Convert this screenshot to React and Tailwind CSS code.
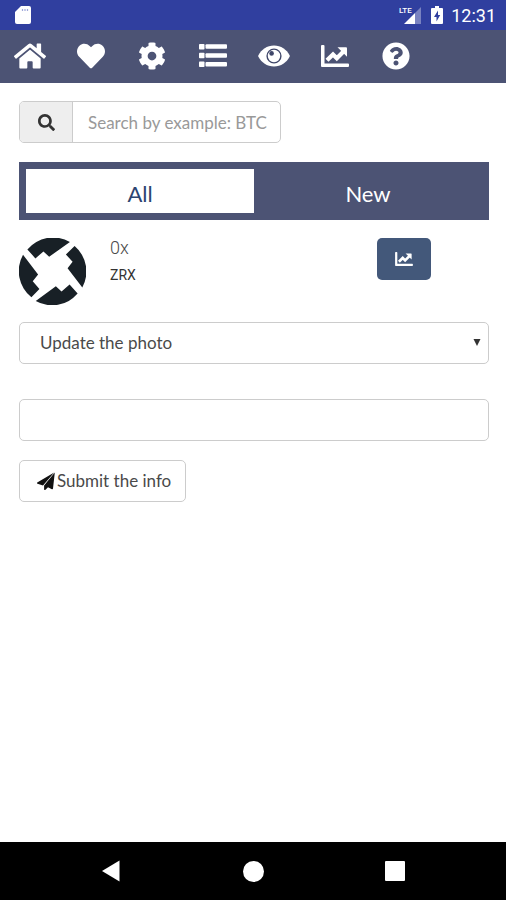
import React from 'react';
import { FaHome, FaHeart, FaCog, FaQuestionCircle, FaSearch } from 'react-icons/fa';

function EyeIcon({ className }) {
  return (
    <svg viewBox="0 0 32 22" className={className} aria-hidden="true">
      <path
        fill="currentColor"
        d="M16 .5C9 .5 3.400 4.500 .4 10.200a1.800 1.800 0 0 0 0 1.600C3.400 17.500 9 21.500 16 21.500s12.600-4 15.600-9.700a1.800 1.800 0 0 0 0-1.600C28.600 4.500 23 .5 16 .5Z"
      />
      <circle cx="16" cy="11" r="6.900" fill="none" stroke="#3f4669" strokeWidth="1.400" />
      <circle cx="13.600" cy="8.400" r="2.300" fill="#3f4669" />
    </svg>
  );
}

function ListIcon({ className }) {
  return (
    <svg viewBox="0 0 28 23" className={className} fill="currentColor" aria-hidden="true">
      <rect x="0" y="0" width="5.500" height="5.500" rx="0.800" />
      <rect x="6.500" y="0.300" width="21.500" height="4.500" rx="1" />
      <rect x="0" y="8.800" width="5.500" height="5.500" rx="0.800" />
      <rect x="6.500" y="9.300" width="21.500" height="4.500" rx="1" />
      <rect x="0" y="17.500" width="5.500" height="5.500" rx="0.800" />
      <rect x="6.500" y="18" width="21.500" height="4.500" rx="1" />
    </svg>
  );
}

function ChartIcon({ className }) {
  return (
    <svg viewBox="0 0 28 22" className={className} aria-hidden="true">
      <path fill="currentColor" d="M0 1a1 1 0 0 1 1-1h1.500a1 1 0 0 1 1 1v17.500H27a1 1 0 0 1 1 1V21a1 1 0 0 1-1 1H1a1 1 0 0 1-1-1Z" />
      <path fill="none" stroke="currentColor" strokeWidth="4.200" d="M6 15.200L12 9.400l3.800 3.800L22.500 6.500" />
      <path fill="currentColor" d="M16.500 2.200h8.500a1 1 0 0 1 1 1v8.500Z" />
    </svg>
  );
}

function PlaneIcon({ className }) {
  return (
    <svg viewBox="0 0 18 18" className={className} fill="currentColor" aria-hidden="true">
      <path d="M.2 10.500L17.200 .5L6 13.500L.5 11.700a.7.700 0 0 1-.3-1.200Z" />
      <path d="M17.800 .6L16 16.500a.8.800 0 0 1-1.100.700L11 15.200L8.500 17.800c-.400.500-1.400.2-1.400-.4V13.400Z" />
    </svg>
  );
}

const navItems = [
  { label: 'Home', icon: <FaHome className="size-8" /> },
  { label: 'Favourites', icon: <FaHeart className="size-7" /> },
  { label: 'Settings', icon: <FaCog className="size-7" /> },
  { label: 'List', icon: <ListIcon className="h-[23px] w-7" /> },
  { label: 'Watch', icon: <EyeIcon className="h-[22px] w-8" /> },
  { label: 'Charts', icon: <ChartIcon className="h-[22px] w-7" /> },
  { label: 'Help', icon: <FaQuestionCircle className="size-7" /> },
];

function StatusBar() {
  return (
    <div className="flex h-[30px] items-center justify-between bg-[#303f9f] pr-2.5 pl-3.5 text-white">
      <svg viewBox="0 0 18 20" className="h-5 w-[18px]" aria-hidden="true">
        <path fill="currentColor" d="M7 1h8a2 2 0 0 1 2 2v14a2 2 0 0 1-2 2H3a2 2 0 0 1-2-2V7Z" />
        <path stroke="#9fa8da" strokeWidth="1.200" d="M8.500 4v2M11 4v2M13.500 4v2" />
      </svg>
      <div className="flex items-center">
        <svg viewBox="0 0 22 20" className="mr-2.5 h-5 w-[22px]" aria-hidden="true">
          <path fill="#7982c0" d="M16 8l6-6v17h-6Z" />
          <path fill="currentColor" d="M5 19L16 8v11Z" />
          <text x="0" y="8" fontSize="8" fontWeight="500" fill="currentColor" className="font-['Roboto',sans-serif]">
            LTE
          </text>
        </svg>
        <svg viewBox="0 0 12 20" className="mr-2 h-5 w-3" aria-hidden="true">
          <path fill="currentColor" d="M4 1h4v2h3a1 1 0 0 1 1 1v14a1 1 0 0 1-1 1H1a1 1 0 0 1-1-1V4a1 1 0 0 1 1-1h3Z" />
          <path fill="#303f9f" d="M7 5.500L3 12h2.500v4.500L9.200 10H7Z" />
        </svg>
        <span className="pt-0.5 font-['Roboto',sans-serif] text-[18px] leading-5">12:31</span>
      </div>
    </div>
  );
}

function ZrxLogo() {
  return (
    <svg viewBox="56 38 200 200" className="size-[67px]" role="img" aria-label="0x">
      <g fill="#182026">
        <path d="M81 72A100 100 0 0 1 208 50L146 94L129 78L105 99Z" />
        <path d="M222 62A100 100 0 0 1 245 186L217 149L201 128L216 109L196 87Z" />
        <path d="M231 204A100 100 0 0 1 106 226L166 182L183 198L207 177Z" />
        <path d="M68 88A100 100 0 0 0 93 215L117 190L97 167L113 147Z" />
      </g>
    </svg>
  );
}

export default function App() {
  return (
    <div className="flex min-h-screen flex-col bg-white font-['Lato',sans-serif] text-[#4a4a4a]">
      <StatusBar />
      <nav className="flex h-[53px] bg-[#4c5374] pb-0.5 text-white">
        {navItems.map((item) => (
          <a key={item.label} href="#" aria-label={item.label} className="flex w-[61px] items-center justify-center pr-0.5">
            {item.icon}
          </a>
        ))}
      </nav>

      <main className="flex flex-1 flex-col pt-[18px] pr-[17px] pl-[19px]">
        <div className="flex h-[42px] w-[262px] overflow-hidden rounded-[5px] border border-[#ccc]">
          <label htmlFor="search" aria-label="Search" className="flex w-[53px] items-center justify-center border-r border-[#ccc] bg-[#eee] text-[#333]">
            <FaSearch className="size-[17px]" />
          </label>
          <input
            id="search"
            type="text"
            placeholder="Search by example: BTC"
            className="min-w-0 flex-1 pt-0.5 pr-2 pl-[15px] text-[17px] outline-none placeholder:text-[#999]"
          />
        </div>

        <div className="mt-[19px] flex h-[58px] bg-[#4c5374] p-[7px] text-[22px]">
          <button type="button" className="flex-1 bg-white pt-1 text-[#2c4470]">All</button>
          <button type="button" className="flex-1 pt-1 text-white">New</button>
        </div>

        <div className="mt-[18px] grid grid-cols-[91px_1fr_112px] items-start">
          <ZrxLogo />
          <div className="font-['Roboto',sans-serif]">
            <div className="text-[18px] leading-5 font-light">0x</div>
            <div className="mt-[7px] text-[14px] leading-5 text-[#333]">ZRX</div>
          </div>
          <button type="button" aria-label="Chart" className="flex h-[42px] w-[54px] items-center justify-center rounded-[5px] bg-[#43587a] text-white">
            <ChartIcon className="h-3.5 w-[18px]" />
          </button>
        </div>

        <div className="relative mt-[17px]">
          <select
            aria-label="Information to update"
            className="block h-[42px] w-full appearance-none rounded-[5px] border border-[#ccc] bg-white px-5 text-[17px] outline-none"
          >
            <option>Update the photo</option>
          </select>
          <svg viewBox="0 0 8 8" className="pointer-events-none absolute top-4 right-2 size-2" aria-hidden="true">
            <path fill="#333" d="M0.500 1h7L4 8Z" />
          </svg>
        </div>

        <input
          type="text"
          aria-label="Info"
          className="mt-[35px] h-[42px] w-full rounded-[5px] border border-[#ccc] px-5 text-[17px] outline-none"
        />

        <button
          type="button"
          className="mt-[19px] flex h-[42px] items-center self-start rounded-[5px] border border-[#ccc] bg-white pr-3.5 pl-[17px] text-[17px]"
        >
          <PlaneIcon className="mr-0.5 size-[18px] text-[#111]" />
          Submit the info
        </button>
      </main>

      <footer className="flex h-[58px] items-center justify-center gap-[82px] bg-black text-white">
        <button type="button" aria-label="Back" className="flex w-[60px] justify-center">
          <svg viewBox="0 0 18 22" className="h-[22px] w-[18px]" aria-hidden="true">
            <path fill="currentColor" d="M17.500 0.500v21L0 11Z" />
          </svg>
        </button>
        <button type="button" aria-label="Home" className="flex w-[60px] justify-center">
          <span className="size-[21px] rounded-full bg-white" />
        </button>
        <button type="button" aria-label="Recent apps" className="flex w-[60px] justify-center">
          <span className="size-5 rounded-[1px] bg-white" />
        </button>
      </footer>
    </div>
  );
}
